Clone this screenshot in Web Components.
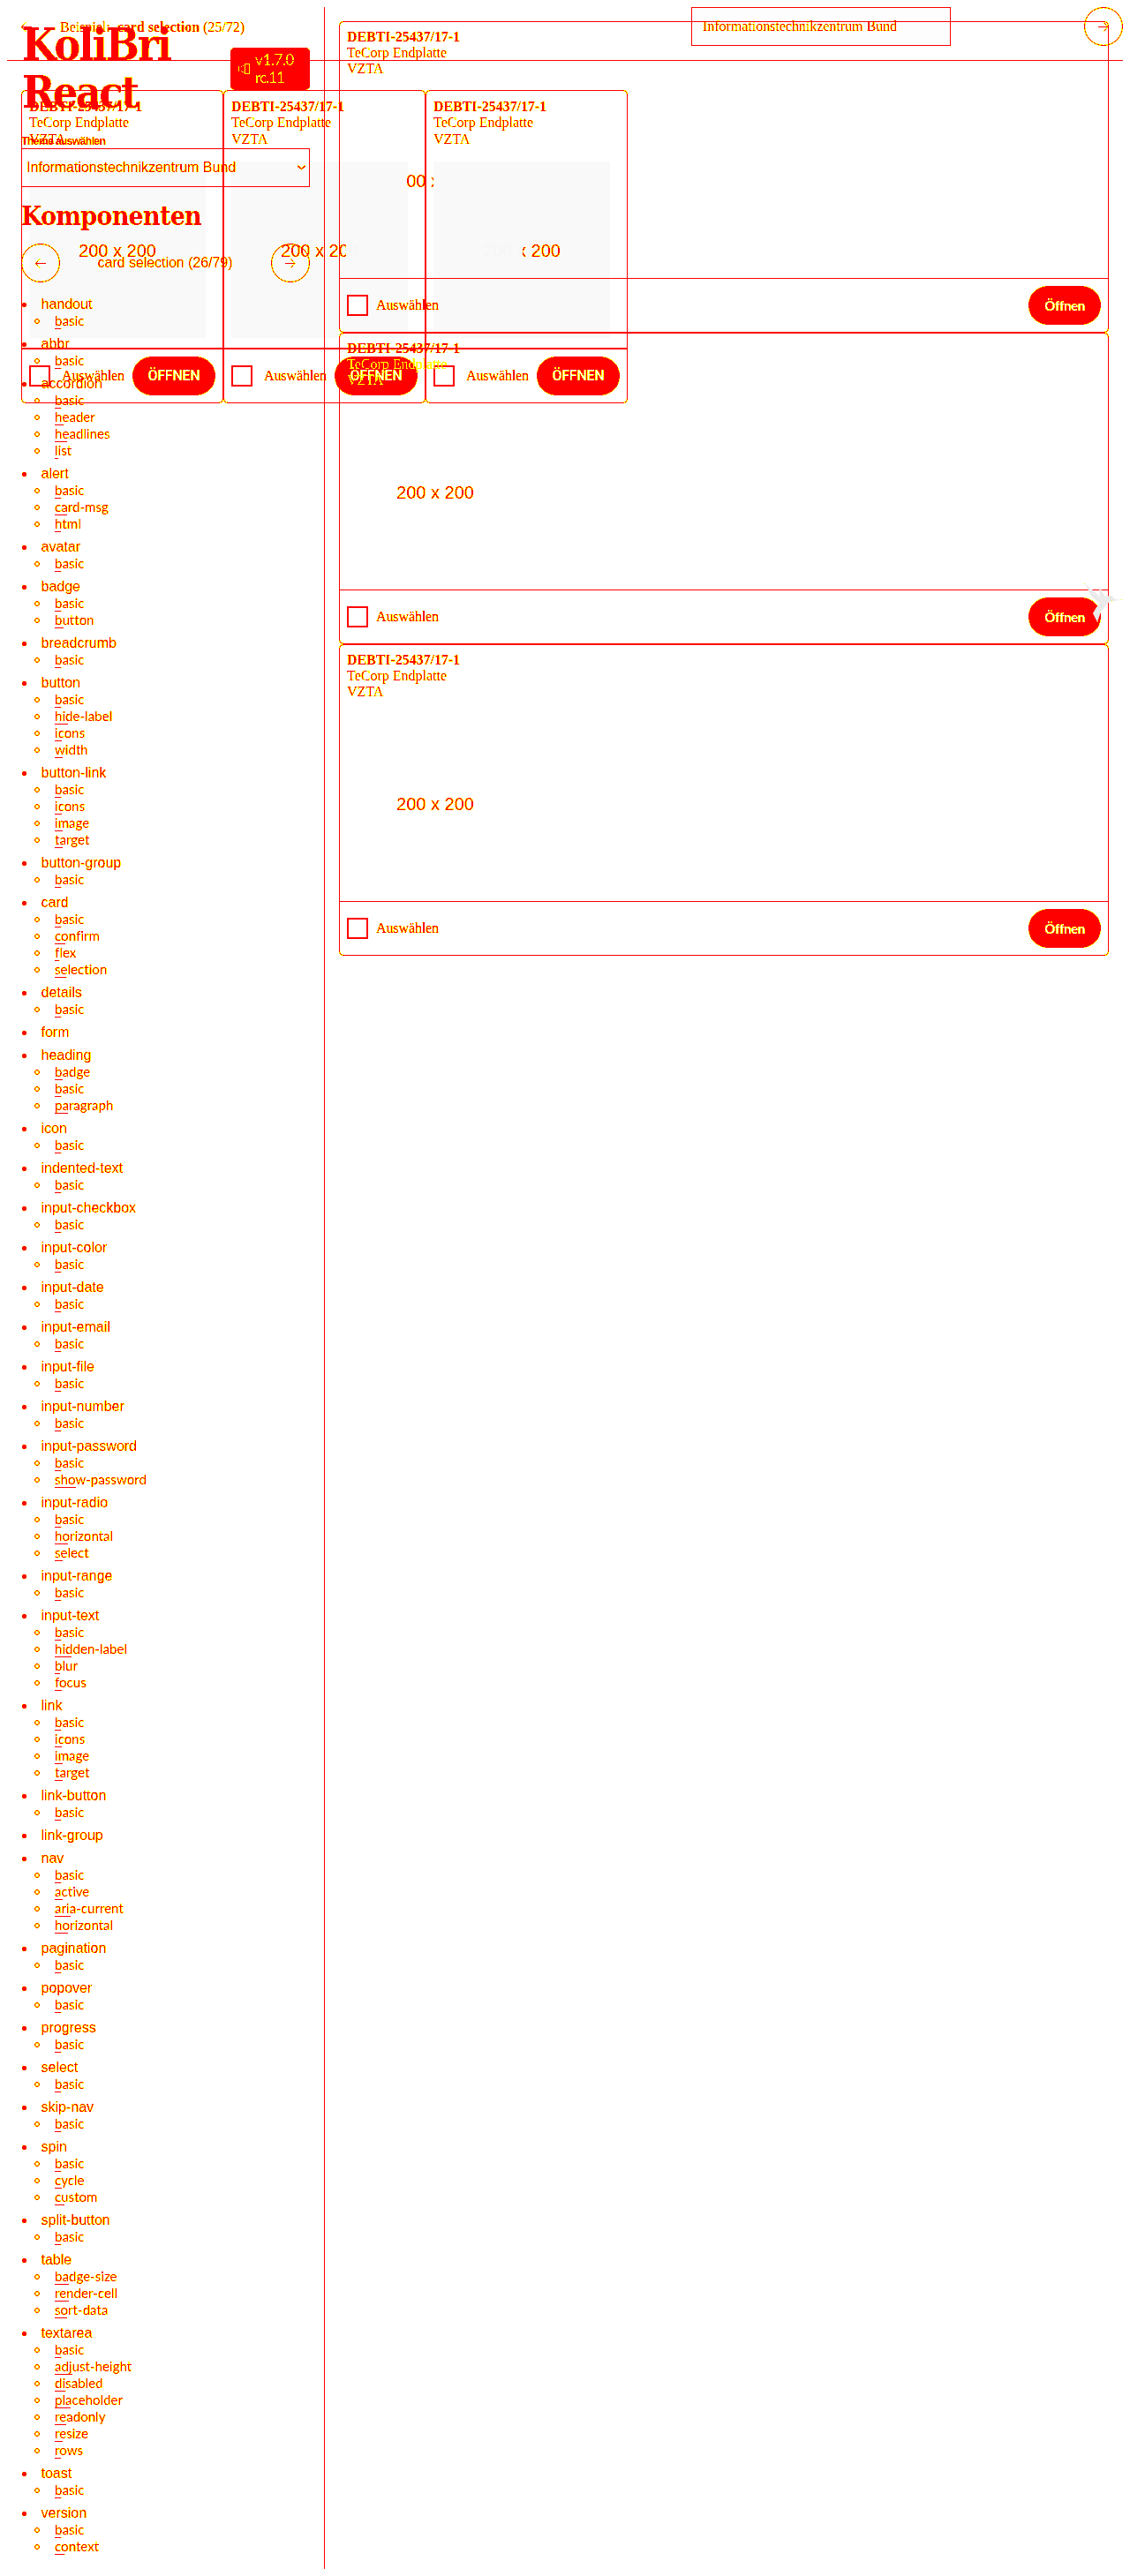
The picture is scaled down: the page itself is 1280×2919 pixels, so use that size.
<!DOCTYPE html>
<html lang="de"><head><meta charset="utf-8"><title>KoliBri React</title>
<style>body{margin:0;background:#fff}</style></head><body>
<page-stage></page-stage>
<script>
const define=(name,html,after)=>customElements.define(name,class extends HTMLElement{
  connectedCallback(){
    if(this.shadowRoot)return;
    const r=this.attachShadow({mode:'open'});
    r.innerHTML=typeof html==='function'?html(this):html;
    if(after)after(this,r);
  }
});

// Text whose letter spacing is adjusted to fill the width given in "w"
define('fit-text','<style>:host{display:inline-block;white-space:nowrap}</style><slot></slot>',el=>{
  const w=+el.getAttribute('w'),n=el.textContent.length;
  if(w)el.style.letterSpacing=((w-el.getBoundingClientRect().width)/n)+'px';
});

define('arrow-icon',el=>`<style>:host{display:inline-block;width:12px;height:11px}svg{display:block}</style>
<svg width="12" height="11" viewBox="0 0 12 11" fill="none" stroke="red" stroke-width="1">${el.getAttribute('dir')==='left'?'<path d="M0 5.5H12"/><path stroke-width=".9" d="M5 .5L.5 5.5L5 10.5"/>':'<path d="M0 5.5H11"/><path stroke-width=".9" d="M6.500 .5L11 5.500L6.500 10.5"/>'}</svg>`);

define('round-button',`<style>:host{box-sizing:border-box;display:flex;align-items:center;justify-content:center;width:44px;height:44px;border:1.200px solid red;border-radius:50%;flex:none}</style><slot></slot>`);

define('card-actions',el=>`<style>
:host{display:flex;align-items:center;box-sizing:border-box;font:16px/18px "Liberation Serif",serif}
i{box-sizing:border-box;width:24px;height:24px;border:2px solid red;background:#fff;flex:none}
.l{margin-left:var(--label-gap);flex:1;-webkit-text-stroke:.2px red}
b{display:flex;align-items:center;justify-content:center;width:var(--btn);height:44px;border-radius:22px;background:red;color:#fff;font:var(--btn-font)}
</style><i></i><span class="l"><fit-text w="71">Auswählen</fit-text></span><b><fit-text w="${el.getAttribute('tw')}">${el.getAttribute('label')}</fit-text></b>`);

define('product-card',el=>{
const wide=el.hasAttribute('wide');
return `<style>
:host{display:flex;flex-direction:column;box-sizing:border-box;border:1px solid red;border-radius:5px;font:16px/18px "Liberation Serif",serif;color:red}
:host([wide]){height:353px}:host(:not([wide])){width:229px;height:355px;line-height:18.5px}
.h{padding:8px 8px 0}
.t{font-weight:bold}
.img{display:flex;align-items:center;justify-content:center;width:200px;height:200px;margin:16px 8px 0;font:20px/22px "Liberation Sans",sans-serif}
:host(:not([wide])) .h{padding-top:8.500px}
:host(:not([wide])) .img{background:#f9f9f9;margin-top:16px}
:host([wide]) .img{margin-top:17px}
.txt{position:relative;top:.5px}
:host([k=b]) .txt{background:linear-gradient(90deg,red 74px,#f4f4f4 74px);-webkit-background-clip:text;color:transparent}
:host([k=c]) .txt{background:linear-gradient(90deg,#f4f4f4 45px,red 45px);-webkit-background-clip:text;color:transparent}
:host([k=first]) .txt{clip-path:inset(0 46px 0 12px)}
:host([k=second]) .d{color:#ff9090}
card-actions{margin-top:auto;border-top:${wide?1:2}px solid red;height:61px;padding:0 8px;--label-gap:9px;--btn:82px;--btn-font:700 15px/20px Lato,sans-serif}
:host(:not([wide])) card-actions{height:62px;padding-bottom:0;--label-gap:13px;--btn:94px;--btn-font:500 16px/20px Roboto,sans-serif}
</style><div class="h"><div class="t"><fit-text w="128">DEBTI-25437/17-1</fit-text></div><div class="d">TeCorp Endplatte</div><div class="d">VZTA</div></div>
<div class="img"><span class="txt">200 x 200</span></div>
<card-actions label="${wide?'Öffnen':'ÖFFNEN'}" tw="${wide?45:59}"></card-actions>`});

define('top-bar',`<style>
:host{display:flex;align-items:center;height:61px;margin:0 8px;border-bottom:1px solid red;align-items:flex-start;box-sizing:border-box;font:16px/18px "Liberation Serif",serif}
.a{width:44px;height:44px;display:flex;align-items:center;justify-content:center}
.t{padding:14px 0 0 16px;width:715px}
.s{box-sizing:border-box;width:294px;height:44px;border:1px solid red;background:#fdfdfd;padding:12px 12px}
round-button{margin-left:auto}
</style><div class="a"><arrow-icon dir="left"></arrow-icon></div><div class="t"><fit-text w="209">Beispiel: &nbsp;<b>card selection</b> (25/72)</fit-text></div><div class="s"><fit-text w="220">Informationstechnikzentrum Bund</fit-text></div><round-button><arrow-icon></arrow-icon></round-button>`);

define('version-badge',`<style>:host{display:flex;align-items:center;width:90px;height:48px;box-sizing:border-box;border-radius:5px;background:red;padding-left:8px;gap:4px;font:17px/20px Lato,sans-serif;color:#ff9090;margin-top:30px}
svg{flex:none}</style><svg width="16" height="14" viewBox="0 0 16 14" fill="none" stroke="#ff9090"><path d="M1.500 4V10M3.500 5L8.500 2.500V11.500L3.500 9.500M8.500 1.500H13.500V12.500H8.500Z"/></svg><div><fit-text w="50">v1.7.0-</fit-text><br><fit-text w="33">rc.11</fit-text></div>`);

define('nav-group',el=>`<style>
:host{display:block;padding-bottom:7px;font:16px/19px "Liberation Sans",sans-serif}
div{display:flex;align-items:center;height:19px}
.m:before{content:"";width:5px;height:5px;margin:1px 17px 0 .5px;border-radius:50%;background:red}
.s{font-family:Lato,sans-serif;font-size:15px;letter-spacing:.05px}
.s:before{content:"";box-sizing:border-box;width:6px;height:6px;margin:0 17px 0 15px;border-radius:50%;border:1px solid red}
.s span{background:linear-gradient(red,red) 0 100%/23% 1px no-repeat;line-height:17px;height:18px}
</style><div class="m">${el.getAttribute('name')}</div>${(el.getAttribute('items')||'').split(' ').filter(Boolean).map(x=>`<div class="s"><span>${x}</span></div>`).join('')}`);

const GROUPS=`handout:basic|abbr:basic|accordion:basic header headlines list|alert:basic card-msg html|avatar:basic|badge:basic button|breadcrumb:basic|button:basic hide-label icons width|button-link:basic icons image target|button-group:basic|card:basic confirm flex selection|details:basic|form:|heading:badge basic paragraph|icon:basic|indented-text:basic|input-checkbox:basic|input-color:basic|input-date:basic|input-email:basic|input-file:basic|input-number:basic|input-password:basic show-password|input-radio:basic horizontal select|input-range:basic|input-text:basic hidden-label blur focus|link:basic icons image target|link-button:basic|link-group:|nav:basic active aria-current horizontal|pagination:basic|popover:basic|progress:basic|select:basic|skip-nav:basic|spin:basic cycle custom|split-button:basic|table:badge-size render-cell sort-data|textarea:basic adjust-height disabled placeholder readonly resize rows|toast:basic|version:basic context`.split('|').map(g=>g.split(':'));

define('side-bar',`<style>
:host{display:block;box-sizing:border-box;width:360px;height:2903px;border-right:1px solid red;padding:16px 16px 0;font:16px/18px "Liberation Sans",sans-serif}
.top{display:flex;justify-content:space-between;height:129px}
h1,h2{margin:0;font-family:"DejaVu Serif Condensed","DejaVu Serif",serif;font-stretch:condensed}
h1{font-size:50px;line-height:54px;padding:0 0 0 1px}
h2{font-size:30px;line-height:38px;margin-top:14px}
label{display:block;font-size:12.500px;font-weight:bold;line-height:15px}
.sel{box-sizing:border-box;width:327px;height:44px;border:1px solid red;display:flex;align-items:center;justify-content:space-between;padding:0 4px 0 5px}
.nav{display:flex;align-items:center;justify-content:space-between;width:327px;height:44px;margin:12px 0 15px}
.nav fit-text{margin-right:1px}
</style>
<div class="top"><h1><fit-text w="168">KoliBri</fit-text><br><fit-text w="130">React</fit-text></h1><version-badge></version-badge></div>
<label><fit-text w="95">Theme auswählen</fit-text></label>
<div class="sel"><fit-text w="237">Informationstechnikzentrum Bund</fit-text><svg width="9" height="6" fill="none" stroke="red" stroke-width="1.400"><path d="M.5 1L4.500 4.500L8.500 1"/></svg></div>
<h2><fit-text w="204">Komponenten</fit-text></h2>
<div class="nav"><round-button><arrow-icon dir="left"></arrow-icon></round-button><fit-text w="153">card selection (26/79)</fit-text><round-button><arrow-icon></arrow-icon></round-button></div>
${GROUPS.map(([n,i])=>`<nav-group name="${n}" items="${i}"></nav-group>`).join('')}`);

define('bird-mark',`<style>:host{display:block;width:44px;height:46px}svg{display:block}</style>
<svg width="44" height="46" viewBox="0 0 44 46"><path fill="#e9e9e9" d="M1 0L18 15L17 5L24 15L31 14L35 18L43 19L31 20L26 23L19 32L15 44L10 34L14 27L18 23L8 14Z"/><path fill="none" stroke="#f5f5f5" stroke-width=".6" d="M3 2L22 22L27 23M18 15L27 19M10 34L19 31M18 5L24 15"/><path fill="#ee0" d="M0 0h1v1h-1zM42 18h1v1h-1zM31 20h1v1h-1zM15 43h1v1h-1z"/></svg>`);

// Stacked page layers; the filter snaps partial coverage to yellow and full coverage to red
define('page-stage',`<style>
:host{display:grid;width:1280px;height:2919px;background:#fff;color:red}
:host>div{grid-area:1/1}
.ink{display:grid;background:#fff;filter:url(#snap);grid-area:1/1}
.ink>*{grid-area:1/1}
.small{display:flex;padding:102px 0 0 24px;align-self:start}
.wide{display:flex;flex-direction:column;padding:24px 24px 0 384px;align-self:start}
.side{padding:8px;align-self:start}
top-bar{align-self:start;padding-top:0;margin-top:8px}
.mark{grid-area:1/1;z-index:1;align-self:start;justify-self:end;padding:661px 8px 0 0}
svg.f{position:absolute;width:0;height:0}
</style>
<svg class="f"><filter id="snap" x="0" y="0" width="1" height="1" color-interpolation-filters="sRGB"><feComponentTransfer>
<feFuncG type="table" tableValues="0 0 0 0 0 0 0 1 1 1 1 1 1 1 1 1 1 1 1 .955 1"/>
<feFuncB type="table" tableValues="0 0 0 0 0 0 0 0 0 0 0 0 0 0 0 0 0 0 0 .955 1"/></feComponentTransfer></filter></svg>
<div class="ink">
<div class="small"><product-card k="a"></product-card><product-card k="b"></product-card><product-card k="c"></product-card></div>
<div class="side"><side-bar></side-bar></div>
<top-bar></top-bar>
<div class="wide"><product-card wide k="first"></product-card><product-card wide k="second"></product-card><product-card wide></product-card></div>
</div>
<div class="mark"><bird-mark></bird-mark></div>`);
</script></body></html>
